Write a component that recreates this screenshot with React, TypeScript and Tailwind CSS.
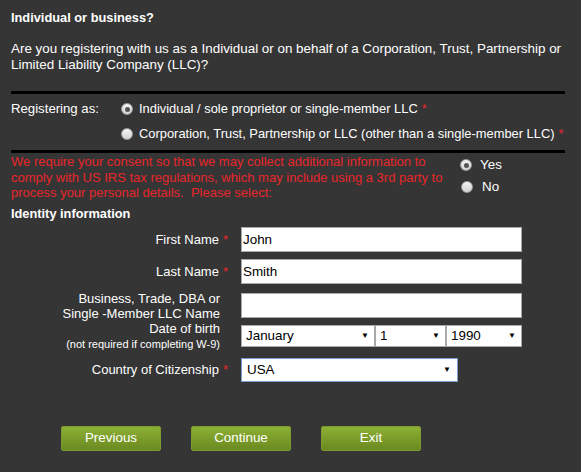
import { useState } from "react";

function Radio({ checked }: { checked?: boolean }) {
  return (
    <span className="inline-flex h-[12px] w-[12px] shrink-0 items-center justify-center rounded-full border border-[#9a9a9a] bg-gradient-to-b from-[#f4f4f4] to-[#d3d3d3]">
      {checked && <span className="h-[5px] w-[5px] rounded-full bg-[#555]" />}
    </span>
  );
}

function Req() {
  return <span className="ml-[4px] text-[#e8262b]">*</span>;
}

function Select({ value, className }: { value: string; className: string }) {
  return (
    <div
      className={`flex h-[22px] items-center justify-between border border-[#a9a9a9] bg-white pl-[4px] pr-[5px] text-[13.4px] text-black ${className}`}
    >
      <span>{value}</span>
      <span className="text-[8px]">▼</span>
    </div>
  );
}

const buttons = ["Previous", "Continue", "Exit"];

export default function App() {
  const [first] = useState("John");
  const [last] = useState("Smith");

  return (
    <div className="h-[472px] w-[581px] overflow-hidden bg-[#353535] px-[11px] pt-[10px] font-['Liberation_Sans',Arial,sans-serif] text-white">
      <h1 className="text-[12.8px] leading-[16px] font-bold">Individual or business?</h1>
      <p className="mt-[15px] text-[13.4px] leading-[15.5px]">
        Are you registering with us as a Individual or on behalf of a Corporation, Trust, Partnership or
        Limited Liability Company (LLC)?
      </p>

      <div className="mt-[19px] h-[3px] w-[554px] bg-black" />

      <div className="mt-[7px] flex text-[12.9px] leading-[16px]">
        <div className="w-[110px] text-[13.2px]">Registering as:</div>
        <div className="flex flex-col gap-[9px] whitespace-nowrap">
          <label className="flex items-center gap-[6px]">
            <Radio checked />
            <span>
              Individual / sole proprietor or single-member LLC<Req />
            </span>
          </label>
          <label className="flex items-center gap-[6px]">
            <Radio />
            <span>
              Corporation, Trust, Partnership or LLC (other than a single-member LLC)<Req />
            </span>
          </label>
        </div>
      </div>

      <div className="mt-[8px] h-[3px] w-[554px] bg-black" />

      <div className="mt-[1px] flex">
        <p className="w-[438px] text-[13px] leading-[15.5px] text-[#e8262b]">
          We require your consent so that we may collect additional information to comply with US IRS tax
          regulations, which may include using a 3rd party to process your personal details.&nbsp; Please
          select:
        </p>
        <div className="ml-[11px] flex flex-col gap-[6px] pt-[3px] text-[13.4px] leading-[16px]">
          <label className="flex items-center gap-[8px]">
            <Radio checked />
            Yes
          </label>
          <label className="flex items-center gap-[9px] pl-[1px]">
            <Radio />
            No
          </label>
        </div>
      </div>

      <h2 className="mt-[5px] text-[12.8px] leading-[16px] font-bold">Identity information</h2>

      <div className="mt-[5px] flex flex-col text-[13px] leading-[15px]">
        <div className="flex items-center">
          <div className="w-[217px] text-right">
            First Name<Req />
          </div>
          <div className="ml-[13px] flex h-[25px] w-[281px] items-center border border-[#a9a9a9] bg-white px-[1px] text-[13.4px] text-black">
            {first}
          </div>
        </div>

        <div className="mt-[7px] flex items-center">
          <div className="w-[217px] text-right">
            Last Name<Req />
          </div>
          <div className="ml-[13px] flex h-[25px] w-[281px] items-center border border-[#a9a9a9] bg-white px-[1px] text-[13.4px] text-black">
            {last}
          </div>
        </div>

        <div className="mt-[7px] flex items-center">
          <div className="w-[217px] pr-[8px] text-right">
            Business, Trade, DBA or
            <br />
            Single -Member LLC Name
          </div>
          <div className="ml-[13px] h-[25px] w-[281px] border border-[#a9a9a9] bg-white" />
        </div>

        <div className="flex items-center">
          <div className="w-[217px] pr-[8px] text-right">
            Date of birth
            <br />
            <span className="text-[11px] leading-[13px]">(not required if completing W-9)</span>
          </div>
          <div className="ml-[13px] flex">
            <Select value="January" className="w-[134px]" />
            <Select value="1" className="w-[71px]" />
            <Select value="1990" className="w-[76px]" />
          </div>
        </div>

        <div className="mt-[7px] flex items-center">
          <div className="w-[217px] text-right">
            Country of Citizenship<Req />
          </div>
          <div className="ml-[13px] flex h-[24px] w-[217px] items-center justify-between border border-[#7a9cd3] bg-white pl-[5px] pr-[6px] text-[13.4px] text-black">
            <span>USA</span>
            <span className="text-[8px]">▼</span>
          </div>
        </div>
      </div>

      <div className="mt-[44px] flex gap-[30px] pl-[50px]">
        {buttons.map((b) => (
          <button
            key={b}
            className="h-[25px] w-[100px] rounded-[2px] border border-[#7d9a2e] bg-gradient-to-b from-[#8db033] to-[#6a8a21] text-[13.4px] text-white"
          >
            {b}
          </button>
        ))}
      </div>
    </div>
  );
}
